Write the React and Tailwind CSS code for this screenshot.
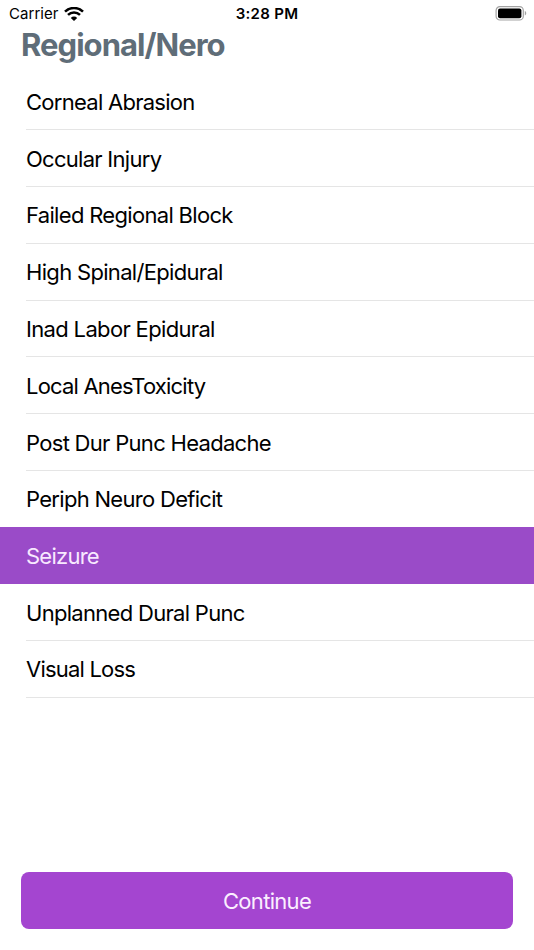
import React from 'react';

const items = [
  { label: 'Corneal Abrasion', tracking: 'tracking-[-0.73px]' },
  { label: 'Occular Injury', tracking: 'tracking-[-0.72px]' },
  { label: 'Failed Regional Block', tracking: 'tracking-[-0.68px]' },
  { label: 'High Spinal/Epidural', tracking: 'tracking-[-0.68px]' },
  { label: 'Inad Labor Epidural', tracking: 'tracking-[-0.66px]' },
  { label: 'Local AnesToxicity', tracking: 'tracking-[-0.8px]' },
  { label: 'Post Dur Punc Headache', tracking: 'tracking-[-0.7px]' },
  { label: 'Periph Neuro Deficit', tracking: 'tracking-[-0.7px]', last: true },
  { label: 'Seizure', tracking: 'tracking-[-0.75px]', selected: true },
  { label: 'Unplanned Dural Punc', tracking: 'tracking-[-0.7px]' },
  { label: 'Visual Loss', tracking: 'tracking-[-0.8px]' },
];

const WifiIcon = () => (
  <svg className="w-5 h-[15px]" viewBox="0 0 20 15" fill="none" stroke="black">
    <path d="M1 4.7 A12.8 12.8 0 0 1 19 4.7" strokeWidth="2.5" />
    <path d="M4 7.9 A8.5 8.5 0 0 1 16 7.9" strokeWidth="2.5" />
    <path d="M10 14.1 L6.8 10.9 A4.5 4.5 0 0 1 13.2 10.9 Z" fill="black" stroke="none" />
  </svg>
);

const BatteryIcon = () => (
  <svg className="w-8 h-4" viewBox="0 0 32 16" fill="none">
    <rect x="1.1" y="0.6" width="27.2" height="13.4" rx="3.8" stroke="#a3a3a3" strokeWidth="1.2" />
    <rect x="3" y="2.4" width="23.4" height="9.8" rx="2" fill="black" />
    <path d="M29.8 5 C31.7 5.7 31.7 8.7 29.8 9.4 Z" fill="#a3a3a3" />
  </svg>
);

const StatusBar = () => (
  <div className="grid grid-cols-3 items-center h-7 pl-[9px] pr-[7px] text-black">
    <div className="flex items-center gap-[5px]">
      <span className="text-[15px] leading-7 tracking-[0.05px]">Carrier</span>
      <WifiIcon />
    </div>
    <span className="text-center text-[15px] leading-7 font-semibold tracking-[0.3px] -ml-0.5">3:28 PM</span>
    <div className="flex justify-end">
      <BatteryIcon />
    </div>
  </div>
);

// the row above the selected one drops its divider
const rowClass = (item) => {
  if (item.selected) return 'h-[56.8px] pl-[26px] bg-[#9a4bc8] text-[#f8e9ff]';
  if (item.last) return 'h-[56.4px] pl-[26px] text-black';
  return 'h-[56.8px] pl-[26px] text-black';
};

const App = () => {
  return (
    <main className="flex flex-col h-[950px] w-[534px] bg-white overflow-hidden font-['Inter',sans-serif]">
      <StatusBar />

      <h1 className="h-[45.4px] pl-[21px] text-[31px] leading-[34px] font-bold tracking-[-0.96px] text-[#5f6d78]">
        Regional/Nero
      </h1>

      <ul>
        {items.map((item) => (
          <li key={item.label} className={rowClass(item)}>
            <div
              className={
                item.selected || item.last
                  ? 'h-full flex items-center pt-px'
                  : 'h-full flex items-center pt-0.5 border-b border-[#e5e5e5]'
              }
            >
              <span className={`text-[22px] ${item.tracking}`}>{item.label}</span>
            </div>
          </li>
        ))}
      </ul>

      <button className="mt-auto mb-[21px] mx-[21px] h-[57px] pt-0.5 rounded-lg bg-[#a445d0] text-[22px] tracking-[-0.7px] text-[#fbefff]">
        Continue
      </button>
    </main>
  );
};

export default App;
